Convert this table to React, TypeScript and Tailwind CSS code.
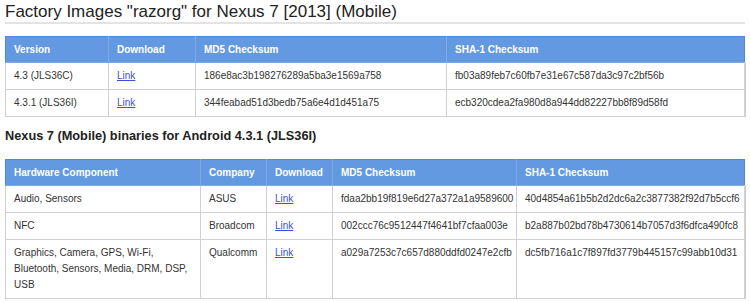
const factory = [
  {
    version: '4.3 (JLS36C)',
    md5: '186e8ac3b198276289a5ba3e1569a758',
    sha1: 'fb03a89feb7c60fb7e31e67c587da3c97c2bf56b',
  },
  {
    version: '4.3.1 (JLS36I)',
    md5: '344feabad51d3bedb75a6e4d1d451a75',
    sha1: 'ecb320cdea2fa980d8a944dd82227bb8f89d58fd',
  },
];

const binaries = [
  {
    hw: 'Audio, Sensors',
    company: 'ASUS',
    md5: 'fdaa2bb19f819e6d27a372a1a9589600',
    sha1: '40d4854a61b5b2d2dc6a2c3877382f92d7b5ccf6',
  },
  {
    hw: 'NFC',
    company: 'Broadcom',
    md5: '002ccc76c9512447f4641bf7cfaa003e',
    sha1: 'b2a887b02bd78b4730614b7057d3f6dfca490fc8',
  },
  {
    hw: 'Graphics, Camera, GPS, Wi-Fi, Bluetooth, Sensors, Media, DRM, DSP, USB',
    company: 'Qualcomm',
    md5: 'a029a7253c7c657d880ddfd0247e2cfb',
    sha1: 'dc5fb716a1c7f897fd3779b445157c99abb10d31',
  },
];

const th =
  'bg-[#6399e0] text-white font-bold text-[10px] text-left align-middle h-[26px] px-2 border-x border-[#7eaae8] first:border-l-[#4e88da] last:border-r-[#4e88da] border-b border-b-[#7eaae8]';
const td =
  'border border-[#d0d0d0] px-2 pt-[5px] pb-[5px] align-top text-[10px] leading-4 text-[#333]';
// checksums render a touch narrower in the original
const hex = ' text-[9.6px]';

function Link() {
  return (
    <a href="#" className="text-[#3b52cf] underline">
      Link
    </a>
  );
}

export default function App() {
  return (
    <div className="bg-white w-[750px] h-[302px] overflow-hidden px-[5px] pt-[2px] font-['Liberation_Sans',Arial,sans-serif]">
      <h1 className="text-[17px] leading-[20px] text-[#222] border-b-2 border-[#e3e3e3]">
        Factory Images "razorg" for Nexus 7 [2013] (Mobile)
      </h1>

      <table className="mt-[12px] w-[739px] table-fixed border-collapse border-t border-t-[#4e88da]">
        <colgroup>
          <col className="w-[103px]" />
          <col className="w-[87px]" />
          <col className="w-[251px]" />
          <col className="w-[298px]" />
        </colgroup>
        <thead>
          <tr>
            <th className={th}>Version</th>
            <th className={th}>Download</th>
            <th className={th}>MD5 Checksum</th>
            <th className={th}>SHA-1 Checksum</th>
          </tr>
        </thead>
        <tbody>
          {factory.map((r) => (
            <tr key={r.version} className="h-[27px]">
              <td className={td + ' align-middle'}>{r.version}</td>
              <td className={td + ' align-middle'}>
                <Link />
              </td>
              <td className={td + hex + ' align-middle'}>{r.md5}</td>
              <td className={td + hex + ' align-middle border-r-2'}>{r.sha1}</td>
            </tr>
          ))}
        </tbody>
      </table>

      <h2 className="mt-[11px] text-[12.75px] leading-[16px] font-bold text-[#222]">
        Nexus 7 (Mobile) binaries for Android 4.3.1 (JLS36I)
      </h2>

      <table className="mt-[15px] w-[739px] table-fixed border-collapse border-t border-t-[#4e88da]">
        <colgroup>
          <col className="w-[195px]" />
          <col className="w-[66px]" />
          <col className="w-[66px]" />
          <col className="w-[184px]" />
          <col className="w-[228px]" />
        </colgroup>
        <thead>
          <tr>
            <th className={th}>Hardware Component</th>
            <th className={th}>Company</th>
            <th className={th}>Download</th>
            <th className={th}>MD5 Checksum</th>
            <th className={th}>SHA-1 Checksum</th>
          </tr>
        </thead>
        <tbody>
          {binaries.map((r) => (
            <tr key={r.company} className="h-[27px]">
              <td className={td + ' pr-[2px]'}>{r.hw}</td>
              <td className={td}>{r.company}</td>
              <td className={td}>
                <Link />
              </td>
              <td className={td + hex}>{r.md5}</td>
              <td className={td + hex + ' border-r-2'}>{r.sha1}</td>
            </tr>
          ))}
        </tbody>
      </table>
    </div>
  );
}
